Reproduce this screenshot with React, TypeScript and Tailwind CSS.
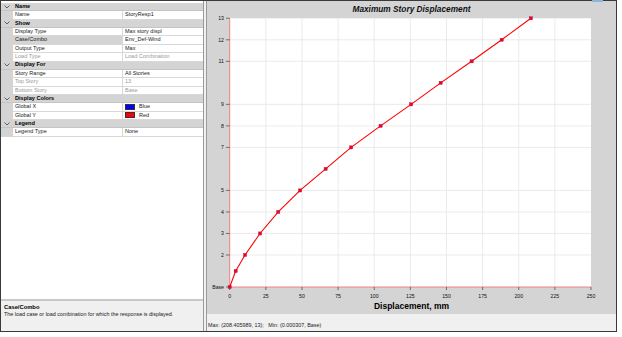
import React from "react";

type Row = {
  h?: string;
  l?: string;
  v?: string;
  sel?: boolean;
  dim?: boolean;
  swatch?: string;
};

const rows: Row[] = [
  { h: "Name" },
  { l: "Name", v: "StoryResp1" },
  { h: "Show" },
  { l: "Display Type", v: "Max story displ" },
  { l: "Case/Combo", v: "Env_Def-Wind", sel: true },
  { l: "Output Type", v: "Max" },
  { l: "Load Type", v: "Load Combination", dim: true },
  { h: "Display For" },
  { l: "Story Range", v: "All Stories" },
  { l: "Top Story", v: "13", dim: true },
  { l: "Bottom Story", v: "Base", dim: true },
  { h: "Display Colors" },
  { l: "Global X", v: "Blue", swatch: "bg-[#0000ff]" },
  { l: "Global Y", v: "Red", swatch: "bg-[#ff0000]" },
  { h: "Legend" },
  { l: "Legend Type", v: "None" },
];

// plot geometry in page pixels
const X0 = 230.7;
const X1 = 592;
const PX = (X1 - X0) / 250;
const TOP = 18.3;
const BASE = 287;

const storyY = (n: number) => {
  if (n === 0) return BASE;
  if (n === 1) return 271;
  if (n === 2) return 255;
  return 255 - 21.52 * (n - 2);
};

const disp = [0, 4.15, 10.6, 21, 33.6, 48.7, 66.4, 84, 104.4, 125.5, 146, 167.4, 188.2, 208.4];
const yLabels: [number, string][] = [
  [13, "13"],
  [12, "12"],
  [11, "11"],
  [9, "9"],
  [8, "8"],
  [7, "7"],
  [5, "5"],
  [4, "4"],
  [3, "3"],
  [2, "2"],
  [0, "Base"],
];

function Chevron() {
  return (
    <svg width="6" height="4" viewBox="0 0 6 4">
      <polyline points="0.5,0.5 3,3 5.5,0.5" fill="none" stroke="#555" strokeWidth="0.9" />
    </svg>
  );
}

function PropertyGrid() {
  return (
    <div className="flex flex-col">
      {rows.map((r, i) =>
        r.h ? (
          <div key={i} className="flex h-[8.36px] bg-[#d4d4d4] border-b border-[#c4c4c4]">
            <div className="w-[12px] flex items-center justify-center">
              <Chevron />
            </div>
            <div className="flex items-center pl-[2px] text-[5.6px] font-bold leading-none text-black">{r.h}</div>
          </div>
        ) : (
          <div key={i} className="flex h-[8.36px]">
            <div className="w-[12px] bg-[#d4d4d4]" />
            <div
              className={`w-[110px] flex items-center pl-[2px] text-[5.5px] leading-none border-b border-r border-[#d8d8d8] ${
                r.sel ? "bg-[#d4d4d4]" : "bg-white"
              } ${r.dim ? "text-[#9a9a9a]" : "text-[#1a1a1a]"}`}
            >
              {r.l}
            </div>
            <div
              className={`flex-1 flex items-center pl-[2px] text-[5.5px] leading-none border-b border-[#d8d8d8] bg-white ${
                r.dim ? "text-[#9a9a9a]" : "text-[#1a1a1a]"
              }`}
            >
              {r.swatch && <span className={`w-[10px] h-[6px] border border-[#333] mr-[4px] ${r.swatch}`} />}
              {r.v}
            </div>
          </div>
        )
      )}
    </div>
  );
}

function Plot() {
  const pts = disp.map((d, n) => [X0 + d * PX, storyY(n)] as [number, number]);
  const xticks = Array.from({ length: 11 }, (_, k) => k * 25);
  return (
    <svg width="408" height="283" viewBox="208 15 408 283" className="block">
      <rect x={X0} y={TOP} width={X1 - X0} height={BASE - TOP} fill="#fff" />
      {xticks.slice(1, 10).map((t) => (
        <line key={t} x1={X0 + t * PX} x2={X0 + t * PX} y1={TOP} y2={BASE} stroke="#e6e6e6" strokeWidth="0.8" />
      ))}
      {yLabels.slice(1, 10).map(([n]) => (
        <line key={n} x1={X0} x2={X1} y1={storyY(n)} y2={storyY(n)} stroke="#e6e6e6" strokeWidth="0.8" />
      ))}
      <line x1={X0} x2={X0} y1={TOP} y2={BASE} stroke="#f07878" strokeWidth="0.9" />
      <line x1={X0} x2={X1} y1={BASE} y2={BASE} stroke="#f07878" strokeWidth="0.9" />
      {yLabels.map(([n, s]) => (
        <g key={s}>
          <line x1={227} x2={X0} y1={storyY(n)} y2={storyY(n)} stroke="#444" strokeWidth="0.7" />
          <text
            x={225}
            y={storyY(n) + 1.8}
            textAnchor="end"
            fontSize="5.2"
            fontFamily="'Liberation Sans', Arial, sans-serif"
            fill="#111"
          >
            {s}
          </text>
        </g>
      ))}
      {xticks.map((t) => (
        <g key={t}>
          <line x1={X0 + t * PX} x2={X0 + t * PX} y1={BASE} y2={BASE + 3} stroke="#444" strokeWidth="0.7" />
          <text
            x={X0 + t * PX}
            y={297.5}
            textAnchor="middle"
            fontSize="5.2"
            fontFamily="'Liberation Sans', Arial, sans-serif"
            fill="#111"
          >
            {t}
          </text>
        </g>
      ))}
      <polyline points={pts.map((p) => p.join(",")).join(" ")} fill="none" stroke="#ff0000" strokeWidth="1.1" />
      {pts.map(([x, y], i) => (
        <rect key={i} x={x - 1.6} y={y - 1.6} width="3.2" height="3.2" fill="#ff0000" stroke="#8a2a9a" strokeWidth="0.4" />
      ))}
    </svg>
  );
}

export default function App() {
  return (
    <div className="relative w-[622px] h-[337px] bg-white font-['Liberation_Sans',Arial,sans-serif] overflow-hidden">
      <div className="w-[617px] h-[332px] border border-[#3a3a3a] flex">
        {/* property panel */}
        <div className="w-[203px] flex flex-col border-r border-[#9a9a9a] bg-white">
          <div className="h-[2px]" />
          <PropertyGrid />
          <div className="flex-1" />
          <div className="h-[32px] border-t-2 border-[#c8c8c8] bg-[#f0f0f0] px-[3px] pt-[3px]">
            <div className="text-[5.8px] font-bold leading-[7px] text-black">Case/Combo</div>
            <div className="text-[5.4px] leading-[7px] text-[#1a1a1a]">
              The load case or load combination for which the response is displayed.
            </div>
          </div>
        </div>
        <div className="w-[3px] bg-[#f0f0f0] border-r border-[#9a9a9a]" />
        {/* chart panel */}
        <div className="flex-1 flex flex-col">
          <div className="flex-1 flex flex-col bg-[#d4d4d4]">
            <div className="h-[14px] flex items-center justify-center pt-[2px] text-[8.3px] font-bold italic leading-none text-[#111]">
              Maximum Story Displacement
            </div>
            <Plot />
            <div className="h-[16px] flex items-center justify-center text-[8.5px] font-bold leading-none text-black">
              Displacement, mm
            </div>
          </div>
          <div className="h-[17px] bg-[#f0f0f0] flex items-end pb-[2px] pl-[1px] text-[5.4px] leading-[7px] text-[#222] whitespace-pre">
            {"Max: (208.405989, 13);   Min: (0.000307, Base)"}
          </div>
        </div>
      </div>
      <div className="absolute top-0 left-[592px] w-[11px] h-[2px] bg-[#8fb4dc]" />
    </div>
  );
}
